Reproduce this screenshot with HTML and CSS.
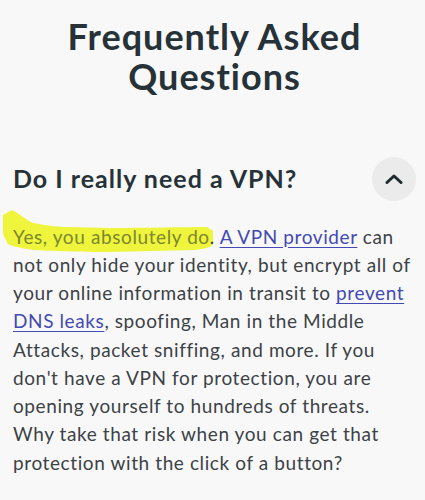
FILE: index.html
```html
<!DOCTYPE html>
<html lang="en">
<head>
<meta charset="utf-8">
<link rel="stylesheet" href="styles.css">
</head>
<body>
<main class="faq">
  <h1 class="faq-title">Frequently Asked Questions</h1>
  <section class="faq-item">
    <div class="faq-head">
      <h2 class="faq-question">Do I really need a VPN?</h2>
      <button class="faq-toggle" aria-label="Collapse">
        <svg width="18" height="10" viewBox="0 0 18 10"><path d="M2 8.5 L9 2 L16 8.5" fill="none" stroke="#1f2a30" stroke-width="3" stroke-linecap="round" stroke-linejoin="round"/></svg>
      </button>
    </div>
    <p class="faq-answer"><svg class="hl-mark" viewBox="0 0 230 60" aria-hidden="true"><path d="M3 15 L12 10 C20 14 26 20 33 23 C50 26 60 27 67 27 L110 28 C150 28 180 27 207 27 L213 31 L213 44 C212 47 205 49 195 50 L110 52 C80 52 50 51 33 50 C20 48 12 46 8 44 C5 38 3 35 3 33 Z" fill="#eef53c"/></svg><span class="hl">Yes, you absolutely do</span>. <a href="#">A VPN provider</a> can not only hide your identity, but encrypt all of your online information in transit to <a href="#">prevent DNS leaks</a>, spoofing, Man in the Middle Attacks, packet sniffing, and more. If you don't have a VPN for protection, you are opening yourself to hundreds of threats. Why take that risk when you can get that protection with the click of a button?</p>
  </section>
</main>
</body>
</html>
```
FILE: styles.css
```css
html {
  background: #f8f8f8;
}
html, body {
  margin: 0;
  padding: 0;
}
body {
  font-family: "Lato", "Liberation Sans", sans-serif;
  color: #3c4246;
}
.faq {
  padding: 0 9px 0 13px;
}
.faq-title {
  margin: 16px 0 0;
  text-align: center;
  font-size: 36px;
  line-height: 40px;
  font-weight: 700;
  color: #263238;
  letter-spacing: 1px;
}
.faq-item {
  margin-top: 61px;
}
.faq-head {
  display: flex;
  align-items: center;
  justify-content: space-between;
}
.faq-question {
  margin: 0;
  padding-bottom: 3px;
  font-size: 25px;
  line-height: 30px;
  font-weight: 700;
  color: #263238;
  letter-spacing: 1px;
}
.faq-toggle {
  width: 44px;
  height: 44px;
  border: none;
  border-radius: 50%;
  background: #ebebeb;
  display: flex;
  align-items: center;
  justify-content: center;
  padding: 0;
}
.faq-answer {
  position: relative;
  z-index: 0;
  margin: 21.5px 0 0;
  font-size: 19px;
  line-height: 28.25px;
  letter-spacing: 0.6px;
}
.faq-answer a {
  color: #434ab3;
  text-decoration: underline;
  text-underline-offset: 3px;
}
.hl {
  color: #7d872d;
}
.hl-mark {
  position: absolute;
  left: -13px;
  top: -22.5px;
  width: 230px;
  height: 60px;
  z-index: -1;
}
```
